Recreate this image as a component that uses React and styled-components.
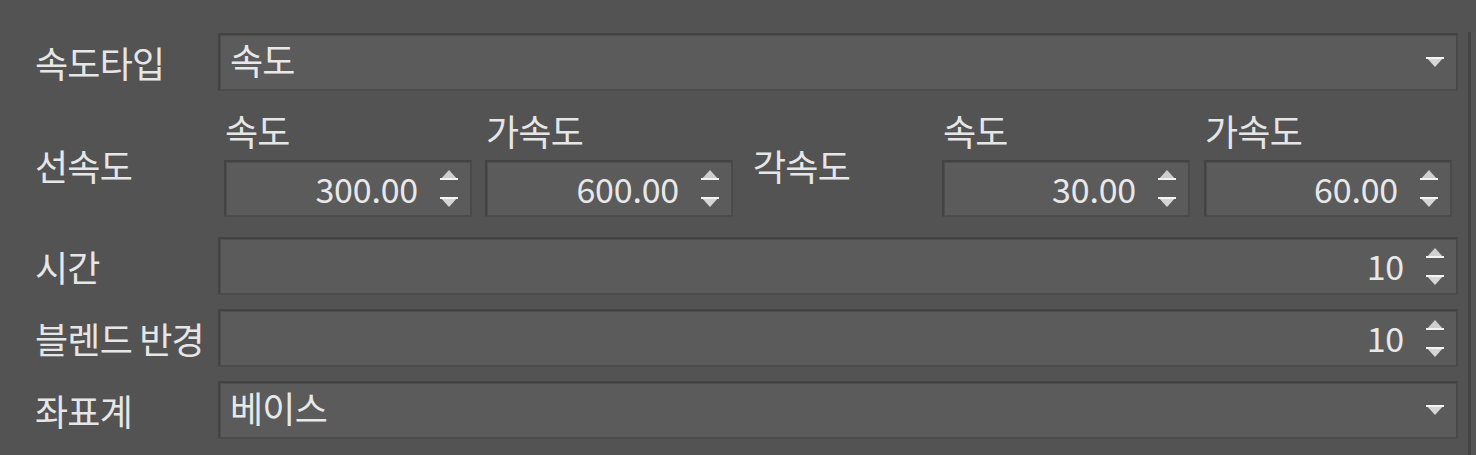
import React from "react";
import styled, { createGlobalStyle } from "styled-components";

const Global = createGlobalStyle`
  html, body { margin: 0; padding: 0; background: #535353; }
  body { font-family: "Noto Sans CJK KR", "Noto Sans", sans-serif; color: #e6e6e6; }
`;

const Page = styled.div`
  width: 1476px;
  height: 455px;
  display: flex;
  background: #535353;
  overflow: hidden;
`;

const Form = styled.div`
  width: 1468px;
  padding: 33px 10px 0 35px;
  box-sizing: border-box;
  display: flex;
  flex-direction: column;
`;

const SidePanel = styled.div`
  flex: 1;
  margin-top: 32px;
  border-left: 3px solid #444444;
  background: #555555;
`;

const Row = styled.div`
  display: flex;
  align-items: center;
  margin-top: ${(p) => p.$gap || 0}px;
`;

const hangul = `
  font-size: 36px;
  letter-spacing: -0.8px;
`;

const Label = styled.div`
  width: 183px;
  flex: none;
  ${hangul}
  line-height: 40px;
  white-space: nowrap;
`;

const Box = styled.div`
  position: relative;
  box-sizing: border-box;
  height: ${(p) => p.$h || 58}px;
  flex: ${(p) => (p.$fixed ? "none" : "1")};
  background: #5b5b5b;
  border: 2px solid #434343;
  border-bottom-color: #4c4c4c;
  border-right-color: #4a4a4a;
  box-shadow: inset 1px 1px 0 #4e4e4e;
  display: flex;
  align-items: center;
  color: #e8e8e8;
`;

const ComboText = styled.span`
  padding-left: 10px;
  flex: 1;
  ${hangul}
  line-height: 40px;
  margin-top: -6px;
`;

const NumText = styled.span`
  flex: 1;
  text-align: right;
  padding-right: 52px;
  font-size: 34px;
  line-height: 40px;
  letter-spacing: -0.2px;
`;

const ArrowWrap = styled.div`
  position: absolute;
  right: 10px;
  top: 0;
  bottom: 0;
  width: 22px;
  display: flex;
  flex-direction: column;
  justify-content: center;
  align-items: center;
  gap: ${(p) => p.$gap || 0}px;
`;

const Tri = ({ up }) => (
  <svg width="20" height="12" viewBox="0 0 20 12">
    {up ? (
      <>
        <polygon points="10,1 19,11 1,11" fill="#cfcfcf" />
        <rect x="1" y="9" width="18" height="2" fill="#f2f2f2" />
      </>
    ) : (
      <>
        <polygon points="1,1 19,1 10,11" fill="#d6d6d6" />
        <rect x="1" y="1" width="18" height="2" fill="#f4f4f4" />
      </>
    )}
  </svg>
);

const Combo = ({ value }) => (
  <Box>
    <ComboText>{value}</ComboText>
    <ArrowWrap>
      <Tri />
    </ArrowWrap>
  </Box>
);

const Spin = ({ value, h, fixed }) => (
  <Box $h={h} $fixed={fixed}>
    <NumText>{value}</NumText>
    <ArrowWrap $gap={15}>
      <Tri up />
      <Tri />
    </ArrowWrap>
  </Box>
);

const SubField = styled.div`
  width: 248px;
  flex: none;
  display: flex;
  flex-direction: column;
  margin-left: ${(p) => p.$ml || 0}px;
`;

const SubLabel = styled.div`
  ${hangul}
  line-height: 36px;
  height: 36px;
  margin-bottom: 12px;
  padding-left: 1px;
`;

const MidLabel = styled.div`
  width: 189px;
  flex: none;
  margin-left: 20px;
  ${hangul}
  line-height: 40px;
`;

const Field = ({ label, value, ml }) => (
  <SubField $ml={ml}>
    <SubLabel>{label}</SubLabel>
    <Spin value={value} h={57} fixed />
  </SubField>
);

export default function App() {
  return (
    <>
      <Global />
      <Page>
        <Form>
          <Row>
            <Label>속도타입</Label>
            <Combo value="속도" />
          </Row>
          <Row $gap={21}>
            <Label>선속도</Label>
            <Field label="속도" value="300.00" ml={6} />
            <Field label="가속도" value="600.00" ml={13} />
            <MidLabel>각속도</MidLabel>
            <Field label="속도" value="30.00" />
            <Field label="가속도" value="60.00" ml={14} />
          </Row>
          <Row $gap={20}>
            <Label>시간</Label>
            <Spin value="10" />
          </Row>
          <Row $gap={14}>
            <Label>블렌드 반경</Label>
            <Spin value="10" />
          </Row>
          <Row $gap={14}>
            <Label>좌표계</Label>
            <Combo value="베이스" />
          </Row>
        </Form>
        <SidePanel />
      </Page>
    </>
  );
}
